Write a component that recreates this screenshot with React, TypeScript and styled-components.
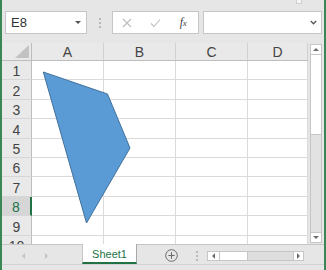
import styled, { createGlobalStyle } from "styled-components";

const GREEN = "#217346";
const LINE = "#c6c6c6";

const GlobalStyle = createGlobalStyle`
  html, body { margin: 0; padding: 0; background: #fff; }
  body { font-family: "Liberation Sans", Arial, sans-serif; }
  * { box-sizing: border-box; }
`;

const columns = ["A", "B", "C", "D"];
const rows = [1, 2, 3, 4, 5, 6, 7, 8, 9, 10];
const selectedRow = 8;

// freeform shape, coordinates relative to the sheet canvas
const shapePoints = [
  [41.3, 29],
  [105.5, 51],
  [128, 105],
  [84.5, 180],
];

export default function App() {
  return (
    <>
      <GlobalStyle />
      <Window>
        <FormulaBar>
          <NameBox>
            <span>E8</span>
            <Caret />
          </NameBox>
          <GripSlot>
            <Grip />
          </GripSlot>
          <FxButtons>
            <FxButton>
              <svg width="10" height="10" viewBox="0 0 10 10">
                <path d="M1 1 L9 9 M9 1 L1 9" stroke="#bdbdbd" strokeWidth="1.1" fill="none" />
              </svg>
            </FxButton>
            <FxButton>
              <svg width="11" height="10" viewBox="0 0 11 10">
                <path d="M1 5.5 L4 8.5 L10 1.5" stroke="#bdbdbd" strokeWidth="1.1" fill="none" />
              </svg>
            </FxButton>
            <FxButton>
              <FxLabel>
                f<small>x</small>
              </FxLabel>
            </FxButton>
          </FxButtons>
          <FormulaInput>
            <svg width="7" height="5" viewBox="0 0 7 5">
              <path d="M0.8 1 L3.5 3.8 L6.2 1" stroke="#555" strokeWidth="1.3" fill="none" />
            </svg>
          </FormulaInput>
          <RibbonStub />
        </FormulaBar>

        <Body>
          <Sheet>
            <Corner />
            {columns.map((c) => (
              <ColHeader key={c}>{c}</ColHeader>
            ))}
            {rows.map((r) => (
              <Row key={r} r={r} />
            ))}
            <ShapeLayer width="306" height="201" viewBox="0 0 306 201">
              <polygon
                points={shapePoints.map((p) => p.join(",")).join(" ")}
                fill="#5b9bd5"
                stroke="#41719c"
                strokeWidth="1"
                strokeLinejoin="round"
              />
            </ShapeLayer>
          </Sheet>
          <VScroll>
            <ScrollTrack>
              <ArrowBox>
                <Tri $dir="up" />
              </ArrowBox>
              <VThumb />
              <Spacer />
              <ArrowBox $last>
                <Tri $dir="down" />
              </ArrowBox>
            </ScrollTrack>
          </VScroll>
        </Body>

        <TabBar>
          <TabNav>
            <Tri $dir="left" $light />
            <Tri $dir="right" $light />
          </TabNav>
          <SheetTab>Sheet1</SheetTab>
          <TabTools>
            <AddSheet>
              <svg width="13" height="13" viewBox="0 0 13 13">
                <circle cx="6.5" cy="6.5" r="5.8" stroke="#6b6b6b" strokeWidth="1" fill="none" />
                <path d="M6.5 3.3 V9.7 M3.3 6.5 H9.7" stroke="#6b6b6b" strokeWidth="1.1" />
              </svg>
            </AddSheet>
            <Grip />
            <HScroll>
              <HArrow>
                <Tri $dir="left" />
              </HArrow>
              <HThumb />
              <Spacer />
              <HArrow $last>
                <Tri $dir="right" />
              </HArrow>
            </HScroll>
          </TabTools>
        </TabBar>
        <StatusStrip />
      </Window>
    </>
  );
}

function Row({ r }: { r: number }) {
  const selected = r === selectedRow;
  return (
    <>
      <RowHeader $selected={selected}>{r}</RowHeader>
      {columns.map((c) => (
        <Cell key={c} />
      ))}
    </>
  );
}

// Estilos
const Window = styled.div`
  position: relative;
  width: 326px;
  height: 270px;
  display: flex;
  flex-direction: column;
  background: #e6e6e6;
  border-left: 2px solid #3a8654;
  border-right: 2px solid #3a8654;
  overflow: hidden;
  font-family: "Liberation Sans", Arial, sans-serif;
`;

const FormulaBar = styled.div`
  position: relative;
  flex: none;
  height: 43px;
  display: flex;
  align-items: flex-start;
  padding: 11px 2px 0 3px;
`;

const NameBox = styled.div`
  width: 82px;
  height: 23px;
  display: flex;
  align-items: center;
  justify-content: space-between;
  padding: 0 5px 0 5px;
  background: #fff;
  border: 1px solid ${LINE};
  font-size: 13px;
  color: #333;
`;

const Caret = styled.span`
  width: 0;
  height: 0;
  border-left: 3px solid transparent;
  border-right: 3px solid transparent;
  border-top: 3px solid #555;
`;

const GripSlot = styled.div`
  width: 25px;
  height: 23px;
  display: flex;
  align-items: center;
  justify-content: center;
`;

const Grip = styled.span`
  display: block;
  width: 2px;
  height: 10px;
  border-left: 2px dotted #b8b8b8;
`;

const FxButtons = styled.div`
  width: 87px;
  height: 23px;
  display: flex;
  background: #fff;
  border: 1px solid ${LINE};
`;

const FxButton = styled.div`
  width: 28px;
  display: flex;
  align-items: center;
  justify-content: center;
`;

const FxLabel = styled.i`
  font-family: "Liberation Serif", "Times New Roman", serif;
  font-size: 12px;
  color: #444;
  letter-spacing: -0.5px;

  small {
    font-size: 9px;
  }
`;

const FormulaInput = styled.div`
  flex: 1;
  height: 23px;
  margin-left: 4px;
  display: flex;
  align-items: center;
  justify-content: flex-end;
  padding-right: 4px;
  background: #fff;
  border: 1px solid ${LINE};
`;

const RibbonStub = styled.div`
  position: absolute;
  top: 0;
  left: 294px;
  width: 6px;
  height: 4px;
  background: #f5f5f5;
  border: 1px solid #cfcfcf;
  border-top: none;
`;

const Body = styled.div`
  flex: none;
  height: 201px;
  display: flex;
`;

const Sheet = styled.div`
  position: relative;
  flex: 1;
  display: grid;
  grid-template-columns: 30px repeat(3, 72px) 1fr;
  grid-template-rows: 18px repeat(10, 19.4px);
  background: #fff;
  overflow: hidden;
  font-size: 14px;
`;

const HeaderBase = styled.div`
  display: flex;
  align-items: flex-end;
  justify-content: center;
  line-height: 14px;
  padding-bottom: 1px;
  background: #e9e9e9;
  color: #444;
`;

const Corner = styled(HeaderBase)`
  position: relative;
  border-right: 1px solid #bdbdbd;
  border-bottom: 1px solid #bdbdbd;

  &::after {
    content: "";
    position: absolute;
    right: 2px;
    bottom: 2px;
    width: 14px;
    height: 13px;
    background: #c2c2c2;
    clip-path: polygon(100% 0, 100% 100%, 0 100%);
  }
`;

const ColHeader = styled(HeaderBase)`
  border-right: 1px solid #d0d0d0;
  border-bottom: 1px solid #bdbdbd;
`;

const RowHeader = styled(HeaderBase)<{ $selected?: boolean }>`
  background: ${(p) => (p.$selected ? "#d6d6d6" : "#e9e9e9")};
  color: ${(p) => (p.$selected ? GREEN : "#444")};
  border-right: ${(p) => (p.$selected ? `2px solid ${GREEN}` : "1px solid #bdbdbd")};
  border-bottom: 1px solid #d6d6d6;
`;

const Cell = styled.div`
  border-right: 1px solid #dadada;
  border-bottom: 1px solid #dadada;
`;

const ShapeLayer = styled.svg`
  position: absolute;
  left: 0;
  top: 0;
  pointer-events: none;
`;

const VScroll = styled.div`
  width: 16px;
  padding: 1px 2px 1px 2px;
  display: flex;
`;

const ScrollTrack = styled.div`
  flex: 1;
  display: flex;
  flex-direction: column;
  border: 1px solid ${LINE};
  background: #e2e2e2;
`;

const ArrowBox = styled.div<{ $last?: boolean }>`
  height: 10px;
  display: flex;
  align-items: center;
  justify-content: center;
  background: #fff;
  border-top: ${(p) => (p.$last ? `1px solid ${LINE}` : "none")};
  border-bottom: ${(p) => (p.$last ? "none" : `1px solid ${LINE}`)};
`;

const VThumb = styled.div`
  height: 80px;
  background: #fff;
  border-bottom: 1px solid ${LINE};
`;

const Spacer = styled.div`
  flex: 1;
`;

type Dir = "up" | "down" | "left" | "right";

const Tri = styled.span<{ $dir: Dir; $light?: boolean }>`
  width: 0;
  height: 0;
  ${(p) => {
    const c = p.$light ? "#c4c4c4" : "#6e6e6e";
    switch (p.$dir) {
      case "up":
        return `border-left: 3px solid transparent; border-right: 3px solid transparent; border-bottom: 3px solid ${c};`;
      case "down":
        return `border-left: 3px solid transparent; border-right: 3px solid transparent; border-top: 3px solid ${c};`;
      case "left":
        return `border-top: 3px solid transparent; border-bottom: 3px solid transparent; border-right: 3px solid ${c};`;
      default:
        return `border-top: 3px solid transparent; border-bottom: 3px solid transparent; border-left: 3px solid ${c};`;
    }
  }}
`;

const TabBar = styled.div`
  flex: none;
  height: 20px;
  display: flex;
`;

const TabNav = styled.div`
  width: 80px;
  display: flex;
  align-items: center;
  gap: 20px;
  padding: 2px 0 0 20px;
  border-top: 1px solid ${LINE};
`;

const SheetTab = styled.div`
  width: 55px;
  display: flex;
  align-items: center;
  justify-content: center;
  padding-top: 1px;
  background: #fff;
  color: ${GREEN};
  font-size: 11px;
  border-left: 1px solid ${LINE};
  border-right: 1px solid #a9a9a9;
  border-bottom: 2px solid ${GREEN};
`;

const TabTools = styled.div`
  flex: 1;
  display: flex;
  align-items: center;
  padding: 2px 0 0 28px;
  border-top: 1px solid ${LINE};

  & > ${Grip} {
    margin-left: 18px;
  }
`;

const AddSheet = styled.div`
  width: 13px;
  height: 13px;
  display: flex;
`;

const HScroll = styled.div`
  width: 97px;
  height: 10px;
  margin-left: 9px;
  display: flex;
  border: 1px solid ${LINE};
  background: #dedede;
`;

const HArrow = styled.div<{ $last?: boolean }>`
  width: ${(p) => (p.$last ? "10px" : "12px")};
  display: flex;
  align-items: center;
  justify-content: center;
  background: #fff;
  border-left: ${(p) => (p.$last ? `1px solid ${LINE}` : "none")};
  border-right: ${(p) => (p.$last ? "none" : `1px solid ${LINE}`)};
`;

const HThumb = styled.div`
  width: 28px;
  background: #fff;
  border-right: 1px solid ${LINE};
`;

const StatusStrip = styled.div`
  flex: 1;
  border-top: 1px solid #d2d2d2;
  background: #e6e6e6;
`;
